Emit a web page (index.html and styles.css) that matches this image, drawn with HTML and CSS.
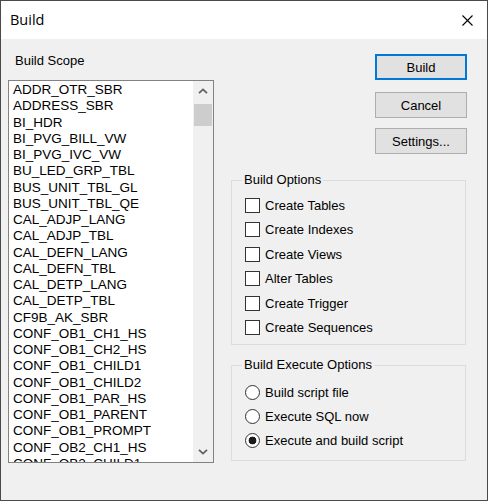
FILE: index.html
```html
<!DOCTYPE html>
<html lang="en">
<head>
<meta charset="utf-8">
<title>Build</title>
<link rel="stylesheet" href="styles.css">
</head>
<body>
<div class="window">
  <div class="titlebar">
    <span class="title">Build</span>
    <svg class="close" width="11" height="11" viewBox="0 0 11 11"><path d="M0.5 0.5 L10.5 10.5 M10.5 0.5 L0.5 10.5" stroke="#000" stroke-width="1.1" fill="none"/></svg>
  </div>
  <div class="body">
    <div class="scope">
      <div class="scope-label">Build Scope</div>
      <div class="listbox">
        <ul class="items">
          <li>ADDR_OTR_SBR</li>
          <li>ADDRESS_SBR</li>
          <li>BI_HDR</li>
          <li>BI_PVG_BILL_VW</li>
          <li>BI_PVG_IVC_VW</li>
          <li>BU_LED_GRP_TBL</li>
          <li>BUS_UNIT_TBL_GL</li>
          <li>BUS_UNIT_TBL_QE</li>
          <li>CAL_ADJP_LANG</li>
          <li>CAL_ADJP_TBL</li>
          <li>CAL_DEFN_LANG</li>
          <li>CAL_DEFN_TBL</li>
          <li>CAL_DETP_LANG</li>
          <li>CAL_DETP_TBL</li>
          <li>CF9B_AK_SBR</li>
          <li>CONF_OB1_CH1_HS</li>
          <li>CONF_OB1_CH2_HS</li>
          <li>CONF_OB1_CHILD1</li>
          <li>CONF_OB1_CHILD2</li>
          <li>CONF_OB1_PAR_HS</li>
          <li>CONF_OB1_PARENT</li>
          <li>CONF_OB1_PROMPT</li>
          <li>CONF_OB2_CH1_HS</li>
          <li>CONF_OB2_CHILD1</li>
        </ul>
        <div class="scrollbar">
          <div class="arrow"><svg width="10" height="6" viewBox="0 0 10 6"><path d="M1 5.2 L5 1.4 L9 5.2" stroke="#606060" stroke-width="1.8" fill="none"/></svg></div>
          <div class="track"><div class="thumb"></div></div>
          <div class="arrow"><svg width="10" height="6" viewBox="0 0 10 6"><path d="M1 0.8 L5 4.6 L9 0.8" stroke="#606060" stroke-width="1.8" fill="none"/></svg></div>
        </div>
      </div>
    </div>
    <div class="side">
      <div class="buttons">
        <button class="btn default">Build</button>
        <button class="btn cancel">Cancel</button>
        <button class="btn settings">Settings...</button>
      </div>
      <fieldset class="group options">
        <legend>Build Options</legend>
        <ul class="choices">
          <li><label><input type="checkbox" class="check"><span>Create Tables</span></label></li>
          <li><label><input type="checkbox" class="check"><span>Create Indexes</span></label></li>
          <li><label><input type="checkbox" class="check"><span>Create Views</span></label></li>
          <li><label><input type="checkbox" class="check"><span>Alter Tables</span></label></li>
          <li><label><input type="checkbox" class="check"><span>Create Trigger</span></label></li>
          <li><label><input type="checkbox" class="check"><span>Create Sequences</span></label></li>
        </ul>
      </fieldset>
      <fieldset class="group execute">
        <legend>Build Execute Options</legend>
        <ul class="choices radios">
          <li><label><input type="radio" name="exec" class="radio"><span>Build script file</span></label></li>
          <li><label><input type="radio" name="exec" class="radio"><span>Execute SQL now</span></label></li>
          <li><label><input type="radio" name="exec" class="radio" checked><span>Execute and build script</span></label></li>
        </ul>
      </fieldset>
    </div>
  </div>
</div>
</body>
</html>
```
FILE: styles.css
```css
* { box-sizing: border-box; }
html, body { margin: 0; padding: 0; background: #f0f0f0; }

.window {
  width: 488px;
  height: 501px;
  border: 1px solid #4a4a4a;
  background: #f0f0f0;
  font-family: "Liberation Sans", Arial, sans-serif;
  font-size: 13px;
  color: #000;
  overflow: hidden;
}

.titlebar {
  height: 38px;
  background: #fff;
  display: flex;
  align-items: center;
  justify-content: space-between;
  padding: 0 14px 0 9px;
}
.title {
  font-family: "Open Sans", "Noto Sans", sans-serif;
  font-size: 14.5px;
  line-height: 20px;
}
.close { display: block; }

.body {
  display: flex;
  padding-left: 7px;
  gap: 17px;
}

.scope { width: 206px; }
.scope-label {
  margin: 14px 0 11px 7px;
  line-height: 16px;
}
.listbox {
  height: 383px;
  border: 1px solid #828282;
  background: #fff;
  display: flex;
}
.items {
  flex: 1;
  margin: 0;
  padding: 1px 0 0 4px;
  list-style: none;
  overflow: hidden;
  font-size: 13.5px;
  line-height: 16.25px;
  white-space: nowrap;
}
.scrollbar {
  width: 20px;
  background: #f0f0f0;
  display: flex;
  flex-direction: column;
}
.arrow {
  height: 20px;
  display: flex;
  align-items: center;
  justify-content: center;
}
.arrow svg { display: block; }
.track { flex: 1; }
.thumb {
  margin: 3px 1px 0;
  height: 22px;
  background: #cdcdcd;
}

.side {
  width: 236px;
  display: flex;
  flex-direction: column;
}
.buttons {
  display: flex;
  flex-direction: column;
  align-items: flex-end;
  margin-top: 15px;
}
.btn {
  width: 92px;
  height: 26px;
  border: 1px solid #adadad;
  background: #e1e1e1;
  font: inherit;
  color: #000;
  padding: 0;
  margin: 0;
}
.btn.default { border: 2px solid #0078d7; }
.btn.cancel { margin-top: 12px; }
.btn.settings { margin-top: 10px; }

.group {
  width: 235px;
  margin: 0;
  border: 1px solid #dcdcdc;
  padding: 0 0 0 10px;
  min-width: 0;
}
.group legend {
  padding: 0 2px;
  line-height: 16px;
}
.options { margin-top: 18px; }
.execute { margin-top: 12px; }

.choices {
  list-style: none;
  margin: 0;
  padding: 5px 0 4px 3px;
}
.choices li {
  height: 24.5px;
  display: flex;
  align-items: center;
}
.choices.radios { padding: 7px 0 8px 3px; }
.choices.radios li { height: 24px; }
.choices label {
  display: flex;
  align-items: center;
  gap: 5px;
}
.check, .radio {
  appearance: none;
  -webkit-appearance: none;
  width: 15px;
  height: 15px;
  margin: 0;
  border: 1px solid #333;
  background: #fff;
  flex: none;
}
.radio { border-radius: 50%; }
.radio:checked {
  background: radial-gradient(circle, #1a1a1a 0, #1a1a1a 3.6px, #fff 4.2px);
}
```
